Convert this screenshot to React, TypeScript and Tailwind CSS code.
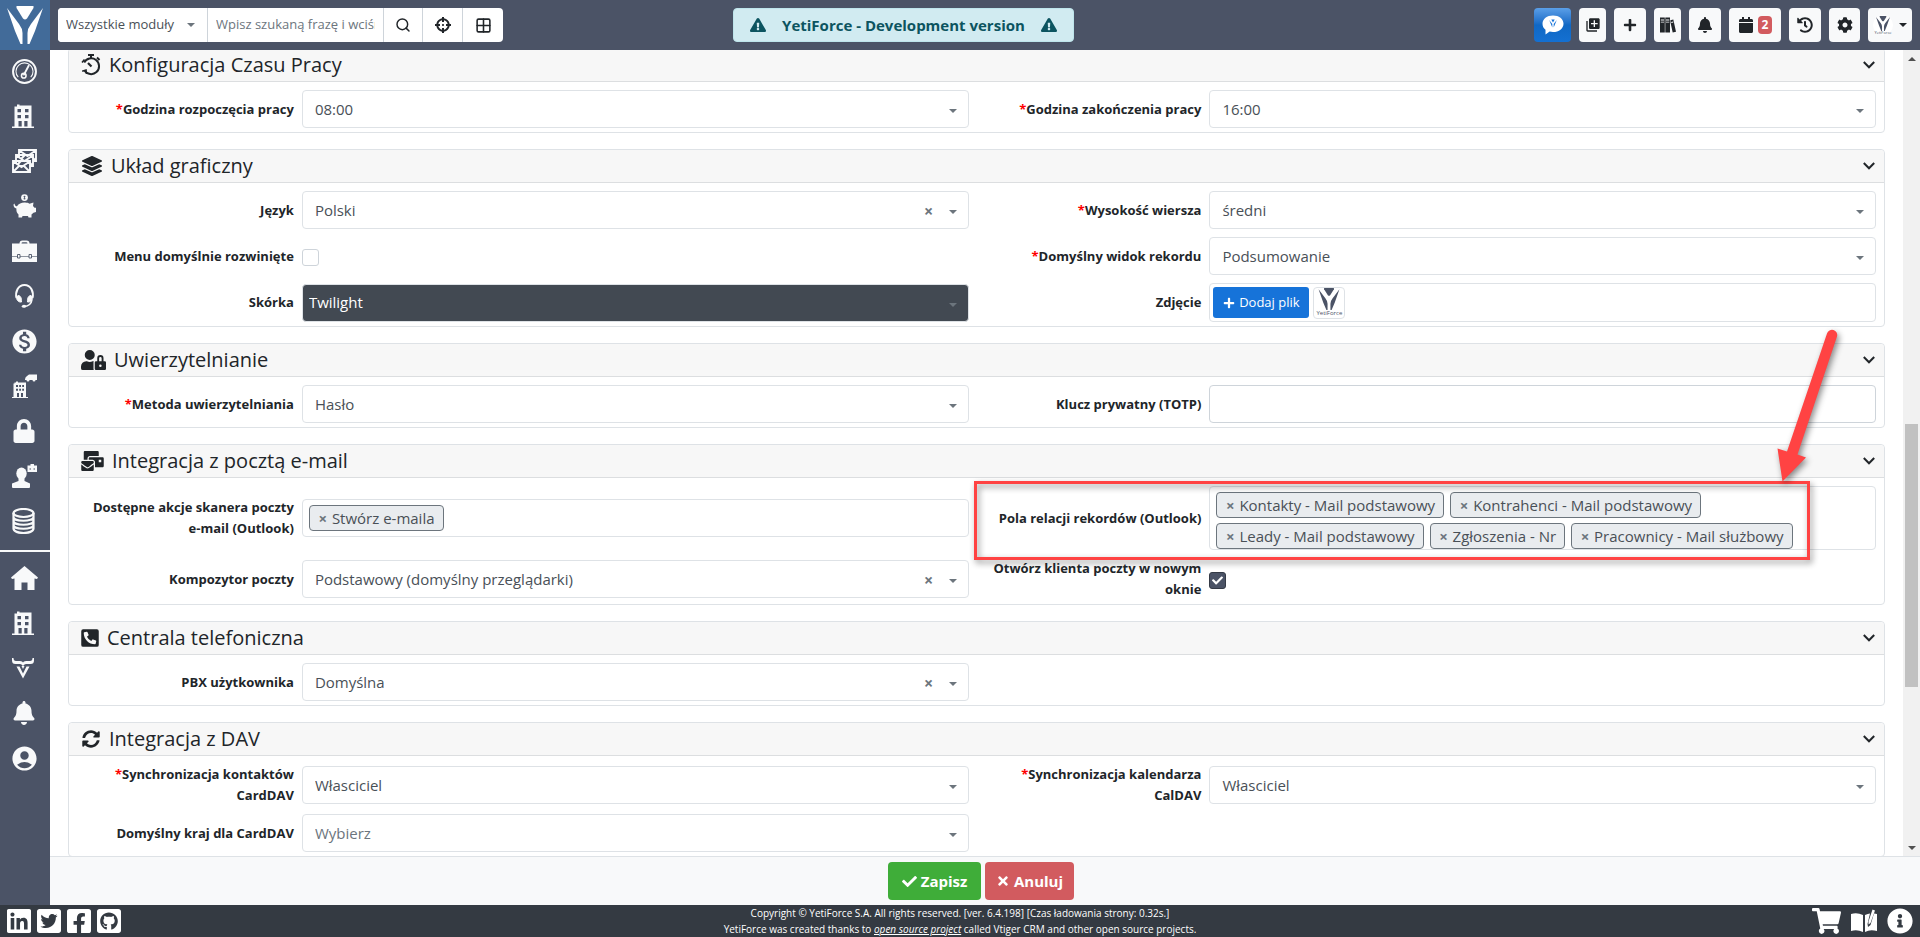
import { useId, useState } from 'react';
import type { ReactNode } from 'react';
import { Grid2x2, Search } from 'lucide-react';
import {
  FaBell,
  FaCalendar,
  FaCheck,
  FaCog,
  FaCrosshairs,
  FaExclamationTriangle,
  FaFacebookSquare,
  FaGithubSquare,
  FaHistory,
  FaInfoCircle,
  FaLayerGroup,
  FaLinkedin,
  FaLock,
  FaMailBulk,
  FaPhoneSquareAlt,
  FaPlus,
  FaShoppingCart,
  FaSyncAlt,
  FaTimes,
  FaTwitterSquare,
  FaUserLock,
} from 'react-icons/fa';
import { MdAccountCircle, MdLibraryAdd, MdMonetizationOn } from 'react-icons/md';

/* ---------- drawings ---------- */

function YetiMark({ className }: { className?: string }) {
  return (
    <svg viewBox="0 0 36 38" fill="currentColor" className={className} aria-hidden="true">
      <path d="M9.500 0H26.500V2L20 12.500Q18 14.500 16 12.500L9.500 2Z" />
      <path d="M0 2L12 18Q15.500 22.500 15.500 27V38H13.500L8 25Z" />
      <path d="M36 2L24 18Q20.500 22.500 20.500 27V38H22.500L28 25Z" />
    </svg>
  );
}

function GaugeIcon() {
  return (
    <svg viewBox="0 0 24 24" fill="none" stroke="currentColor" className="size-[25px]">
      <circle cx="12" cy="12" r="11" strokeWidth="1.900" />
      <path d="M6 17.500A8.200 8.200 0 1 1 18 17.500" strokeWidth="1" />
      <path d="M11.500 15L16 6.500" strokeWidth="1.800" strokeLinecap="round" />
      <circle cx="11.300" cy="16" r="2.200" strokeWidth="1.500" />
    </svg>
  );
}

function BuildingIcon() {
  return (
    <svg viewBox="0 0 24 24" fill="currentColor" fillRule="evenodd" className="size-6">
      <path d="M5 0.500H7.500V1.500H19.500V22.500H22V24H0V22.500H2.500V2.500H5ZM5.500 5V8.200H9V5ZM13 5V8.200H16.500V5ZM5.500 11V14.200H9V11ZM13 11V14.200H16.500V11ZM6.500 17V22.500H9.700V17ZM12.300 17V22.500H15.500V17Z" />
    </svg>
  );
}

function MailsIcon() {
  const envelope = 'M0 0H17V11H0ZM1 1L8.500 6L16 1M1 10L6 5M16 10L11 5';
  return (
    <svg viewBox="0 0 25 24" fill="#4b5366" stroke="currentColor" strokeWidth="1.900" className="h-6 w-[25px]">
      <path d={envelope} transform="translate(7 1)" />
      <path d={envelope} transform="translate(4 6)" />
      <path d={envelope} transform="translate(1 12)" />
    </svg>
  );
}

function PiggyIcon() {
  return (
    <svg viewBox="0 0 24 24" fill="currentColor" className="size-6">
      <circle cx="12.500" cy="3.600" r="3.400" />
      <path d="M12.500 1.800V5.400M11.500 4.700H13.500M11.500 2.600H13.500" stroke="#4b5366" strokeWidth="0.800" />
      <path d="M2.500 9.500C3 12 4 12.500 5.200 12C6.500 9.500 10 8.300 13 8.500C15 8.600 16.500 9 17.500 9.700L21.500 8.500L21 12L22.500 13.700H24V18L21.500 18.700L19.500 20.500V23.500H16.500L16 22H10.500L10 23.500H6.500V20.500C4.800 19 4.200 17 4.400 14.500C2.500 14.200 1.500 12.500 1.500 10.500Z" />
    </svg>
  );
}

function BriefcaseIcon() {
  return (
    <svg viewBox="0 0 25 24" fill="currentColor" className="h-6 w-[25px]">
      <path d="M7.500 4.500Q7.500 1.500 10.500 1.500H14.500Q17.500 1.500 17.500 4.500H25V17H0V4.500ZM9.500 4.500H15.500Q15.500 3.200 14.200 3.200H10.800Q9.500 3.200 9.500 4.500Z" fillRule="evenodd" />
      <path d="M0 17.600H25V23H0Z" />
      <path d="M5.500 15.500H8V19H5.500ZM17 15.500H19.500V19H17Z" stroke="#4b5366" strokeWidth="0.900" />
    </svg>
  );
}

function HeadsetIcon() {
  return (
    <svg viewBox="0 0 24 24" fill="none" stroke="currentColor" className="size-6">
      <path d="M4.500 14C3 8 6 1 12.500 1S22 8 20.500 14" strokeWidth="2" />
      <path d="M6 11.500C8.500 11.500 9.800 14 9.500 18C7 18.500 4.500 16.500 4.500 13.500ZM19 11.500C16.500 11.500 15.200 14 15.500 18C18 18.500 20.500 16.500 20.500 13.500Z" fill="currentColor" strokeWidth="1" />
      <path d="M20 15.500C19.500 19.500 17 22 12 22.500" strokeWidth="1.600" />
      <ellipse cx="12" cy="22.300" rx="2.200" ry="1.500" fill="currentColor" stroke="none" />
    </svg>
  );
}

function SupplierIcon() {
  return (
    <svg viewBox="0 0 25 24" fill="currentColor" fillRule="evenodd" className="h-6 w-[25px]">
      <path d="M2.500 8.500H4V7.500H6V8.500H14V23H16V24H0V23H1.500V9.500H2.500ZM4 11V13H6V11ZM7.200 11V13H9V11ZM10.200 11V13H12V11ZM4 14.700V16.700H6V14.700ZM7.200 14.700V16.700H9V14.700ZM10.200 14.700V16.700H12V14.700ZM5 19V23H7V19ZM9 19V23H11V19Z" />
      <path d="M13 5.500Q13 3 15 2L17 0.500H25V6H23.500A1.500 1.500 0 0 1 20.500 6H17.500A1.500 1.500 0 0 1 14.500 6H13Z" />
    </svg>
  );
}

function PartnerIcon() {
  return (
    <svg viewBox="0 0 25 24" fill="currentColor" className="h-6 w-[25px]">
      <ellipse cx="9.500" cy="9.500" rx="5.200" ry="6" />
      <path d="M6.500 13H12.500V17L18 19.500V23Q18 24 17 24H1Q0 24 0 23V19.500L6.500 17Z" />
      <path d="M15.500 1.500H18.500V0H22V1.500H25V8H15.500Z" />
      <path d="M17.500 5H19M21.500 5H23" stroke="#4b5366" />
    </svg>
  );
}

function StackIcon() {
  return (
    <svg viewBox="0 0 24 26" fill="none" stroke="currentColor" strokeWidth="2.200" className="h-[26px] w-6">
      <ellipse cx="11.500" cy="5" rx="10" ry="4" />
      <path d="M1.500 5V20.500C1.500 26.500 21.500 26.500 21.500 20.500V5M1.500 9C1.500 14 21.500 14 21.500 9M1.500 13C1.500 18 21.500 18 21.500 13M1.500 17C1.500 22 21.500 22 21.500 17" />
    </svg>
  );
}

function HomeIcon() {
  return (
    <svg viewBox="0 0 27 24" fill="currentColor" className="h-6 w-[27px]">
      <path d="M13.500 0L27 11.500L26 13L23.500 12.500V24H16.500V16.500H10.500V24H3.500V12.500L1 13L0 11.500Z" />
    </svg>
  );
}

function BullIcon() {
  return (
    <svg viewBox="0 0 24 24" fill="currentColor" className="size-6">
      <path d="M0 2H1.500Q1.500 5 4 5H8Q10.500 5 11 6.500Q11.500 5 14 5H18Q20.500 5 20.500 2H22V4.500Q22 8 18.500 8H14Q12.500 8 11 10Q9.500 8 8 8H3.500Q0 8 0 4.500Z" />
      <path d="M4.500 10.500H7.500L11 17.500L14.500 10.500H17.500L11 22.500Z" />
      <path d="M9.500 10L11 13L12.500 10Z" />
    </svg>
  );
}

function BooksIcon() {
  return (
    <svg viewBox="0 0 16 16" fill="currentColor" fillRule="evenodd" className="size-4">
      <path d="M0 0.500H4.800V15.500H0ZM0.800 2.500V3.500H4V2.500ZM0.800 4.800V5.500H4V4.800Z" />
      <path d="M5.300 0.500H10V15.500H5.300ZM6 2.500V3.500H9.300V2.500ZM6 4.800V5.500H9.300V4.800Z" />
      <path d="M10.300 3.200L13.300 2.500L16 14.800L12.700 15.500L10.600 6ZM11.200 5L11.400 5.900L13.300 5.500L13.100 4.600Z" />
    </svg>
  );
}

function StopwatchIcon() {
  return (
    <svg viewBox="0 0 20 22" fill="none" stroke="currentColor" className="h-[22px] w-5">
      <path d="M3.500 16.500A7.900 7.900 0 1 0 3.200 8.500" strokeWidth="2" />
      <path d="M1 8.500L3.500 5.500M1.200 17.200L5 16L5.500 20" strokeWidth="1.600" />
      <path d="M7 1H13M10 1V4.500M16 3.500L18.500 6" strokeWidth="2" />
      <path d="M7 9L10.500 12.500" strokeWidth="2.200" />
    </svg>
  );
}

function OpenBookIcon() {
  return (
    <svg viewBox="0 0 26 24" fill="currentColor" className="h-6 w-[26px]">
      <path d="M0 5Q6 3 12 6V23Q6 20 0 22Z" />
      <path d="M14 23V6Q17 4.500 19 4.500L16.500 15L17 18L19.500 16L23 4.500L26 5V22Q19 20 14 23Z" />
      <path d="M21.500 0.500L24 1.500L19.500 14L17.500 15.500V12.500Z" />
    </svg>
  );
}

function ChatIcon() {
  return (
    <svg viewBox="0 0 22 20" className="h-5 w-[22px]" aria-hidden="true">
      <path d="M11 0.500C17 0.500 21.500 4 21.500 8.700S17 17 11 17C9.800 17 8.700 16.900 7.700 16.600L3.500 19.500V14.800C1.600 13.200 0.500 11.200 0.500 8.700C0.500 4 5 0.500 11 0.500Z" fill="#fff" />
      <path d="M9.300 4.500H12.700L11 7.500ZM7.200 5L10.300 9V12.500ZM14.800 5L11.700 9V12.500Z" fill="#1673d9" />
    </svg>
  );
}

function Caret({ className }: { className?: string }) {
  return (
    <svg viewBox="0 0 8 4" fill="currentColor" className={`h-1 w-2 ${className ?? ''}`} aria-hidden="true">
      <path d="M0 0H8L4 4Z" />
    </svg>
  );
}

function Arrow() {
  return (
    <svg
      viewBox="0 0 75 170"
      className="pointer-events-none absolute -top-[161px] right-[39px] z-10 h-[170px] w-[75px] drop-shadow-[2px_3px_3px_rgba(0,0,0,0.45)]"
      aria-hidden="true"
    >
      <path d="M57 8.500A5 5 0 0 1 67 11.500L27.500 129.500L36 132.500L12.500 156.500L7.500 123.500L17 126.500Z" fill="#ff4343" />
    </svg>
  );
}

/* ---------- form parts ---------- */

function Label({ id, required, children }: { id: string; required?: boolean; children: ReactNode }) {
  return (
    <label htmlFor={id} className="w-1/4 shrink-0 pl-3 text-right text-[13px] leading-[21px] font-bold text-[#212529]">
      {required && <span className="text-[#ff0000]">*</span>}
      {children}
    </label>
  );
}

function Row({ label, required, children, extra }: {
  label: string;
  required?: boolean;
  children: (id: string) => ReactNode;
  extra?: ReactNode;
}) {
  const id = useId();
  return (
    <div className="relative flex min-w-0 items-center gap-2 pr-2">
      <Label id={id} required={required}>{label}</Label>
      <div className="min-w-0 flex-1">{children(id)}</div>
      {extra}
    </div>
  );
}

function SelectField({ label, value, required, clearable, muted, dark }: {
  label: string;
  value: string;
  required?: boolean;
  clearable?: boolean;
  muted?: boolean;
  dark?: boolean;
}) {
  const skin = dark
    ? 'bg-[#424952] pl-1.5 text-white'
    : muted
      ? 'bg-white pl-3 text-[#6c757d]'
      : 'bg-white pl-3 text-[#495057]';
  return (
    <Row label={label} required={required}>
      {(id) => (
        <div className="relative">
          <select id={id} className={`block h-[38px] w-full appearance-none rounded border border-[#dee2e6] pr-12 text-[15px] ${skin}`}>
            <option>{value}</option>
          </select>
          {clearable && (
            <button type="button" aria-label="Wyczyść" className="absolute top-2 right-[34px] h-6 w-3 text-base leading-6 font-bold text-[#6c757d]">
              ×
            </button>
          )}
          <Caret className="pointer-events-none absolute top-[19px] right-3 text-[#6c757d]" />
        </div>
      )}
    </Row>
  );
}

function TagsField({ label, tags, extra }: { label: string; tags: string[]; extra?: ReactNode }) {
  return (
    <Row label={label} extra={extra}>
      {(id) => (
        <div id={id} className="flex min-h-[38px] flex-wrap content-start gap-x-1.5 gap-y-[5px] rounded border border-[#dee2e6] pt-[5px] pr-14 pl-1.5">
          {tags.map((tag) => (
            <span key={tag} className="flex h-[26px] items-center gap-1 rounded border border-[#6c757d] bg-[#e9ecef] px-2 text-[15px] text-[#495057]">
              <button type="button" aria-label={`Usuń ${tag}`} className="w-2.5 text-center font-bold text-[#6c757d]">
                ×
              </button>
              {tag}
            </span>
          ))}
        </div>
      )}
    </Row>
  );
}

function CheckField({ label, initial }: { label: string; initial: boolean }) {
  const [on, setOn] = useState(initial);
  return (
    <Row label={label}>
      {(id) => (
        <span className="relative mt-0.5 block size-[17px]">
          <input
            id={id}
            type="checkbox"
            checked={on}
            onChange={(e) => setOn(e.target.checked)}
            className="block size-[17px] appearance-none rounded-[3px] border border-[#ced4da] bg-white checked:border-[#343a46] checked:bg-[#4b5366]"
          />
          {on && <FaCheck className="pointer-events-none absolute top-[3px] left-[3px] size-[11px] text-white" />}
        </span>
      )}
    </Row>
  );
}

function Panel({ icon, title, children }: { icon: ReactNode; title: string; children: ReactNode }) {
  return (
    <section className="rounded border border-[#dee2e6] bg-white">
      <header className="flex h-[33px] items-center justify-between rounded-t border-b border-[#dcdee0] bg-[#f7f7f7] pr-[9px] pl-3">
        <h2 className="flex items-center gap-2 text-[20px] leading-6 text-[#212529]">
          {icon}
          {title}
        </h2>
        <button type="button" aria-label={`Zwiń: ${title}`} className="p-0 text-[#212529]">
          <svg viewBox="0 0 12 8" fill="none" stroke="currentColor" strokeWidth="2" className="h-2 w-3">
            <path d="M0.800 1L6 6.300L11.200 1" />
          </svg>
        </button>
      </header>
      <div className="grid grid-cols-2 items-center gap-y-2 pt-2 pb-1">{children}</div>
    </section>
  );
}

/* ---------- page chrome ---------- */

const mainMenu: { name: string; icon: ReactNode }[] = [
  { name: 'Panel', icon: <GaugeIcon /> },
  { name: 'Firmy', icon: <BuildingIcon /> },
  { name: 'Wiadomości', icon: <MailsIcon /> },
  { name: 'Oszczędności', icon: <PiggyIcon /> },
  { name: 'Projekty', icon: <BriefcaseIcon /> },
  { name: 'Wsparcie', icon: <HeadsetIcon /> },
  { name: 'Finanse', icon: <MdMonetizationOn className="size-[29px]" /> },
  { name: 'Dostawcy', icon: <SupplierIcon /> },
  { name: 'Zabezpieczenia', icon: <FaLock className="h-6 w-[22px]" /> },
  { name: 'Partnerzy', icon: <PartnerIcon /> },
  { name: 'Bazy danych', icon: <StackIcon /> },
];

const userMenu: { name: string; icon: ReactNode }[] = [
  { name: 'Start', icon: <HomeIcon /> },
  { name: 'Kontrahenci', icon: <BuildingIcon /> },
  { name: 'Vtiger', icon: <BullIcon /> },
  { name: 'Powiadomienia', icon: <FaBell className="size-6" /> },
  { name: 'Profil', icon: <MdAccountCircle className="size-[29px]" /> },
];

function MenuList({ items, className }: { items: typeof mainMenu; className: string }) {
  return (
    <ul className={`flex flex-col items-center gap-[21px] pr-0.5 ${className}`}>
      {items.map((item) => (
        <li key={item.name} className="flex h-6 items-center">
          <a href="#" aria-label={item.name}>{item.icon}</a>
        </li>
      ))}
    </ul>
  );
}

function TopButton({ name, className, children }: { name: string; className: string; children: ReactNode }) {
  return (
    <button
      type="button"
      aria-label={name}
      className={`flex h-[34px] items-center justify-center rounded bg-[#f8f9fa] text-[#212529] ${className}`}
    >
      {children}
    </button>
  );
}

function TopBar() {
  return (
    <header className="flex h-[50px] shrink-0 items-center bg-[#4b5366] pr-2">
      <div className="flex items-center gap-2">
        <a href="#" aria-label="Strona główna" className="flex h-[50px] w-[50px] items-center justify-center bg-[#426b99] text-white">
          <YetiMark className="h-[38px] w-[36px]" />
        </a>
        <div className="flex h-[34px] divide-x divide-[#ced4da] overflow-hidden rounded bg-white">
          <div className="relative flex items-center">
            <select aria-label="Moduł" className="h-full w-[149px] appearance-none bg-white pl-2 text-[13px] text-[#495057]">
              <option>Wszystkie moduły</option>
            </select>
            <Caret className="pointer-events-none absolute right-3 text-[#6c757d]" />
          </div>
          <input
            aria-label="Szukaj"
            placeholder="Wpisz szukaną frazę i wciśnij enter"
            className="w-[176px] px-2 text-[13px] text-[#495057] placeholder:text-[#6c757d]"
          />
          <button type="button" aria-label="Szukaj" className="flex w-[39px] items-center justify-center text-[#212529]">
            <Search size={16} strokeWidth={2.200} />
          </button>
          <button type="button" aria-label="Wyszukiwanie zaawansowane" className="flex w-10 items-center justify-center text-[#212529]">
            <FaCrosshairs className="size-4" />
          </button>
          <button type="button" aria-label="Filtry" className="flex w-10 items-center justify-center text-[#212529]">
            <Grid2x2 size={17} strokeWidth={2.200} />
          </button>
        </div>
      </div>
      <div className="grow" />
      <div className="flex h-[34px] items-center gap-4 rounded border border-[#bee5eb] bg-[#d1ebf1] px-4 text-[15px] font-bold text-[#0c5460]">
        <FaExclamationTriangle className="size-4" />
        YetiForce - Development version
        <FaExclamationTriangle className="size-4" />
      </div>
      <div className="grow-2" />
      <div className="flex items-center justify-end gap-2">
        <button
          type="button"
          aria-label="Czat"
          className="flex h-[34px] w-[37px] items-center justify-center rounded bg-linear-to-b from-[#5a9fe8] via-[#1068c4] to-[#1470d2]"
        >
          <ChatIcon />
        </button>
        <TopButton name="Szybkie tworzenie" className="w-[27px]"><MdLibraryAdd className="size-4" /></TopButton>
        <TopButton name="Dodaj" className="w-8"><FaPlus className="size-[14px]" /></TopButton>
        <TopButton name="Baza wiedzy" className="w-[27px]"><BooksIcon /></TopButton>
        <TopButton name="Powiadomienia" className="w-8"><FaBell className="size-4" /></TopButton>
        <TopButton name="Kalendarz" className="w-[52px] gap-1">
          <FaCalendar className="size-4" />
          <span className="rounded bg-[#d25b5f] px-1 text-xs leading-[18px] font-bold text-white">2</span>
        </TopButton>
        <TopButton name="Historia" className="w-8"><FaHistory className="size-4" /></TopButton>
        <TopButton name="Ustawienia" className="w-[31px]"><FaCog className="size-4" /></TopButton>
        <TopButton name="Konto" className="w-11 gap-1.5">
          <span className="flex size-5 flex-col items-center justify-center rounded-full bg-white text-[#4b5366]">
            <YetiMark className="h-[15px] w-[14px]" />
            <span className="text-[4px] leading-[4px]">YetiForce</span>
          </span>
          <Caret />
        </TopButton>
      </div>
    </header>
  );
}

function ScrollTrack() {
  return (
    <div className="flex w-[17px] shrink-0 flex-col bg-[#f1f1f1] text-[#505050]" aria-hidden="true">
      <div className="flex h-[17px] items-center justify-center"><Caret className="rotate-180" /></div>
      <div className="grow-[357]" />
      <div className="mx-0.5 grow-[263] bg-[#c1c1c1]" />
      <div className="grow-[152]" />
      <div className="flex h-[17px] items-center justify-center"><Caret /></div>
    </div>
  );
}

const recordTags = [
  'Kontakty - Mail podstawowy',
  'Kontrahenci - Mail podstawowy',
  'Leady - Mail podstawowy',
  'Zgłoszenia - Nr',
  'Pracownicy - Mail służbowy',
];

function Preferences() {
  return (
    <div className="-mt-0.5 flex min-w-0 flex-1 flex-col gap-4 pr-[18px] pl-[18px]">
      <Panel icon={<StopwatchIcon />} title="Konfiguracja Czasu Pracy">
        <SelectField label="Godzina rozpoczęcia pracy" value="08:00" required />
        <SelectField label="Godzina zakończenia pracy" value="16:00" required />
      </Panel>

      <Panel icon={<FaLayerGroup className="h-5 w-[22px]" />} title="Układ graficzny">
        <SelectField label="Język" value="Polski" clearable />
        <SelectField label="Wysokość wiersza" value="średni" required />
        <CheckField label="Menu domyślnie rozwinięte" initial={false} />
        <SelectField label="Domyślny widok rekordu" value="Podsumowanie" required />
        <SelectField label="Skórka" value="Twilight" dark />
        <Row label="Zdjęcie">
          {(id) => (
            <div className="flex h-[39px] items-center gap-1 rounded border border-[#dee2e6] px-[3px]">
              <button id={id} type="button" className="flex h-[31px] w-24 items-center justify-center gap-1 rounded-[3px] bg-[#1673d9] text-[13px] text-white">
                <FaPlus className="size-3" />
                Dodaj plik
              </button>
              <span className="flex h-8 w-8 flex-col items-center justify-center rounded border border-[#dee2e6] text-[#4b5366]">
                <YetiMark className="h-[22px] w-[22px]" />
                <span className="text-[6px] leading-[7px]">YetiForce</span>
              </span>
            </div>
          )}
        </Row>
      </Panel>

      <Panel icon={<FaUserLock className="h-5 w-[25px]" />} title="Uwierzytelnianie">
        <SelectField label="Metoda uwierzytelniania" value="Hasło" required />
        <Row label="Klucz prywatny (TOTP)">
          {(id) => <input id={id} className="block h-[38px] w-full rounded border border-[#ced4da] px-3 text-[15px] text-[#495057]" />}
        </Row>
      </Panel>

      <Panel icon={<FaMailBulk className="h-5 w-[23px]" />} title="Integracja z pocztą e-mail">
        <TagsField label="Dostępne akcje skanera poczty e-mail (Outlook)" tags={['Stwórz e-maila']} />
        <TagsField
          label="Pola relacji rekordów (Outlook)"
          tags={recordTags}
          extra={
            <>
              <div className="pointer-events-none absolute -top-[5px] right-[74px] -bottom-[10px] -left-[3px] border-3 border-[#ff4343] drop-shadow-[2px_3px_3px_rgba(0,0,0,0.45)]" />
              <Arrow />
            </>
          }
        />
        <SelectField label="Kompozytor poczty" value="Podstawowy (domyślny przeglądarki)" clearable />
        <CheckField label="Otwórz klienta poczty w nowym oknie" initial={true} />
      </Panel>

      <Panel icon={<FaPhoneSquareAlt className="h-5 w-[18px]" />} title="Centrala telefoniczna">
        <SelectField label="PBX użytkownika" value="Domyślna" clearable />
      </Panel>

      <Panel icon={<FaSyncAlt className="h-[18px] w-5" />} title="Integracja z DAV">
        <SelectField label="Synchronizacja kontaktów CardDAV" value="Własciciel" required />
        <SelectField label="Synchronizacja kalendarza CalDAV" value="Własciciel" required />
        <SelectField label="Domyślny kraj dla CardDAV" value="Wybierz" muted />
      </Panel>
    </div>
  );
}

function Footer() {
  return (
    <footer className="grid h-8 shrink-0 grid-cols-[1fr_auto_1fr] items-center bg-[#343a42] px-[7px] text-white">
      <div className="flex gap-1.5">
        <a href="#" aria-label="LinkedIn"><FaLinkedin className="h-7 w-6" /></a>
        <a href="#" aria-label="Twitter"><FaTwitterSquare className="h-7 w-6" /></a>
        <a href="#" aria-label="Facebook"><FaFacebookSquare className="h-7 w-6" /></a>
        <a href="#" aria-label="GitHub"><FaGithubSquare className="h-7 w-6" /></a>
      </div>
      <div className="text-center text-[10px] leading-4">
        <p>Copyright © YetiForce S.A. All rights reserved. [ver. 6.4.198] [Czas ładowania strony: 0.32s.]</p>
        <p>
          YetiForce was created thanks to <a href="#" className="italic underline">open source project</a> called Vtiger CRM and other open source projects.
        </p>
      </div>
      <div className="flex items-center justify-end gap-2.5">
        <a href="#" aria-label="Sklep"><FaShoppingCart className="h-[26px] w-[29px]" /></a>
        <a href="#" aria-label="Dokumentacja"><OpenBookIcon /></a>
        <a href="#" aria-label="Informacje"><FaInfoCircle className="size-[26px]" /></a>
      </div>
    </footer>
  );
}

export default function App() {
  return (
    <div className="flex h-screen flex-col overflow-hidden bg-white font-['Open_Sans','Noto_Sans',sans-serif]">
      <TopBar />
      <div className="flex min-h-0 flex-1">
        <nav aria-label="Menu" className="w-[50px] shrink-0 bg-[#4b5366] text-[#f8f9fa]">
          <MenuList items={mainMenu} className="border-b-2 border-[#f8f9fa] pt-[9px] pb-[17px]" />
          <MenuList items={userMenu} className="pt-[14px]" />
        </nav>
        <div className="flex min-w-0 flex-1 flex-col">
          <main className="flex min-h-0 flex-1 overflow-hidden">
            <Preferences />
            <ScrollTrack />
          </main>
          <div className="flex shrink-0 justify-center gap-1 border-t border-[#dee2e6] bg-[#f8f9fa] py-[5px] pr-2 text-[15px] font-bold text-white">
            <button type="button" className="flex h-[38px] w-[93px] items-center justify-center gap-1 rounded bg-[#3fad39]">
              <FaCheck className="size-[15px]" />
              Zapisz
            </button>
            <button type="button" className="flex h-[38px] w-[89px] items-center justify-center gap-1 rounded bg-[#d25b5f]">
              <FaTimes className="size-[14px]" />
              Anuluj
            </button>
          </div>
        </div>
      </div>
      <Footer />
    </div>
  );
}
